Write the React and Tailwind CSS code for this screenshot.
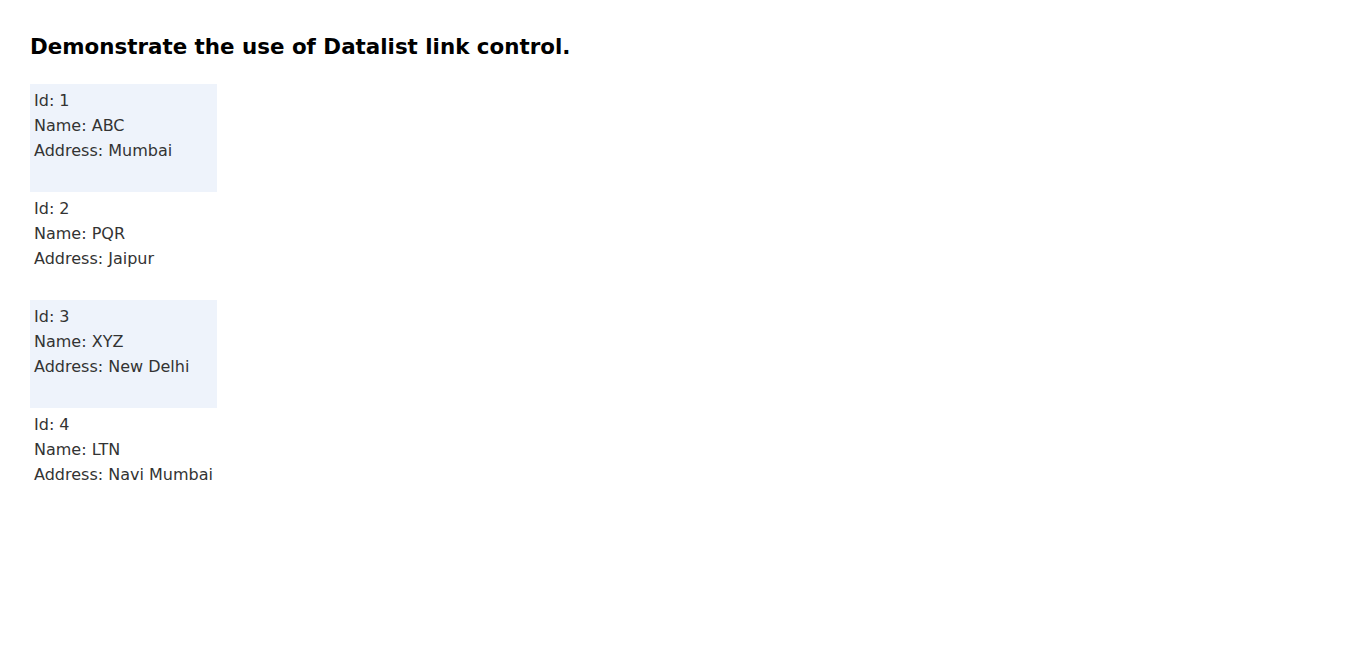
const rows = [
  { id: 1, name: "ABC", address: "Mumbai" },
  { id: 2, name: "PQR", address: "Jaipur" },
  { id: 3, name: "XYZ", address: "New Delhi" },
  { id: 4, name: "LTN", address: "Navi Mumbai" },
];

export default function App() {
  return (
    <div className="min-h-screen bg-white px-[30px] pt-[30px] font-['DejaVu_Sans',sans-serif]">
      <h1 className="text-[21.4px] leading-[33px] font-bold text-black mb-[21px]">
        Demonstrate the use of Datalist link control.
      </h1>
      <table className="border-collapse">
        <tbody>
          {rows.map((r, i) => (
            <tr key={r.id} className={i % 2 === 0 ? "bg-[#eef3fb]" : "bg-white"}>
              <td className="p-[4px] text-[16px] leading-[25px] text-[#333333] whitespace-nowrap">
                Id: {r.id}
                <br />
                Name: {r.name}
                <br />
                Address: {r.address}
                <br />
                <br />
              </td>
            </tr>
          ))}
        </tbody>
      </table>
    </div>
  );
}
